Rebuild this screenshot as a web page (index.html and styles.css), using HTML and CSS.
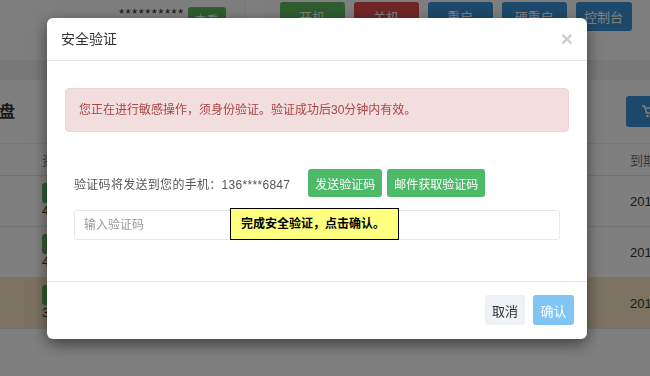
FILE: index.html
```html
<!DOCTYPE html>
<html lang="zh-CN">
<head>
    <meta charset="UTF-8">
    <meta name="viewport" content="width=device-width, initial-scale=1.0">
    <title>安全验证</title>
    <link rel="stylesheet" href="styles.css">
</head>
<body>
    <div class="page">
        <div class="topbar">
            <span class="secret">**********</span>
            <button class="btn btn-success btn-view">查看</button>
            <span class="divider"></span>
            <div class="actions">
                <button class="btn btn-success">开机</button>
                <button class="btn btn-danger">关机</button>
                <button class="btn btn-primary">重启</button>
                <button class="btn btn-primary">硬重启</button>
                <button class="btn btn-primary btn-console">控制台</button>
            </div>
        </div>
        <div class="band"></div>

        <div class="section-head">
            <h3 class="section-title">硬盘</h3>
            <button class="btn btn-primary btn-buy">
                <svg width="14" height="13" viewBox="0 0 14 13">
                    <path d="M0 1h2.5l2 7h7l1.5-5H4" fill="none" stroke="#fff" stroke-width="1.6"/>
                    <circle cx="5.5" cy="11" r="1.3" fill="#fff"/>
                    <circle cx="10.5" cy="11" r="1.3" fill="#fff"/>
                </svg>
                购买
            </button>
        </div>

        <div class="table">
            <div class="tr th">
                <div class="td">资源</div>
                <div class="td td-end">到期时间</div>
            </div>
            <div class="tr">
                <div class="td"><span class="tag">正常</span><div class="size">40GB</div></div>
                <div class="td td-end">2019-06-12</div>
            </div>
            <div class="tr">
                <div class="td"><span class="tag">正常</span><div class="size">40GB</div></div>
                <div class="td td-end">2019-06-12</div>
            </div>
            <div class="tr tr-warn">
                <div class="td"><span class="tag">正常</span><div class="size">30GB</div></div>
                <div class="td td-end">2019-03-28</div>
            </div>
        </div>
    </div>

    <div class="modal-backdrop">
        <div class="modal">
            <div class="modal-header">
                <h4 class="modal-title">安全验证</h4>
                <span class="close">&times;</span>
            </div>
            <div class="modal-body">
                <div class="alert">您正在进行敏感操作，须身份验证。验证成功后30分钟内有效。</div>
                <div class="verify-form">
                    <div class="send-row">
                        <span class="send-label">验证码将发送到您的手机：136****6847</span>
                        <button class="btn-send">发送验证码</button>
                        <button class="btn-send">邮件获取验证码</button>
                    </div>
                    <input type="text" class="code-input" placeholder="输入验证码">
                </div>
                <div class="tip">完成安全验证，点击确认。</div>
            </div>
            <div class="modal-footer">
                <button class="btn-cancel">取消</button>
                <button class="btn-confirm">确认</button>
            </div>
        </div>
    </div>
</body>
</html>
```

FILE: styles.css
```css
* {
    box-sizing: border-box;
}

body {
    margin: 0;
    font-family: "Liberation Sans", "Noto Sans CJK SC", sans-serif;
    font-size: 12px;
    color: #333;
    background-color: #fff;
    overflow: hidden;
}

button {
    font-family: inherit;
    border: none;
    cursor: pointer;
}

/* page under the dialog */
.page {
    width: 700px;
}

.topbar {
    display: flex;
    align-items: flex-start;
    height: 60px;
    padding-left: 119px;
    background-color: #fcfcfc;
}

.secret {
    margin-top: 6px;
    line-height: 16px;
    font-size: 13px;
    letter-spacing: 1.5px;
    color: #222;
}

.btn {
    height: 29px;
    color: #fff;
    font-size: 12px;
    border-radius: 3px;
}

.btn-success {
    background-color: #5cb85c;
}

.btn-danger {
    background-color: #e04c4c;
}

.btn-primary {
    background-color: #3a92d8;
}

.btn-view {
    width: 38px;
    height: 24px;
    margin: 7px 0 0 3px;
}

.divider {
    width: 17px;
    height: 40px;
    margin-left: 19px;
    background-color: #fff;
    border-left: 1px solid #eee;
}

.actions {
    display: flex;
    gap: 9px;
    margin: 2px 0 0 18px;
}

.actions .btn {
    min-width: 65px;
    font-size: 13px;
}

.actions .btn-console {
    min-width: 0;
    width: 56px;
}

.band {
    height: 20px;
    background-color: #f1f1f1;
}

.section-head {
    display: flex;
    align-items: center;
    height: 63px;
}

.section-title {
    margin: 0 0 0 -17px;
    font-size: 16px;
    font-weight: bold;
    line-height: 20px;
}

.btn-buy {
    margin-left: auto;
    width: 74px;
    height: 31px;
    padding-left: 16px;
    display: flex;
    align-items: center;
    gap: 4px;
}

.table {
    border-top: 1px solid #eee;
}

.tr {
    display: flex;
    height: 51px;
    padding-left: 42px;
    border-bottom: 1px solid #e6e6e6;
}

.tr.th {
    height: 32px;
    align-items: center;
    color: #777;
    font-size: 13px;
}

.tr-warn {
    background-color: #f6e4c4;
}

.td {
    padding-top: 7px;
}

.th .td {
    padding-top: 0;
}

.td-end {
    margin-left: auto;
    width: 70px;
    padding-top: 0;
    align-self: center;
    white-space: nowrap;
    font-size: 13px;
}

.tag {
    display: inline-block;
    height: 20px;
    padding: 0 8px;
    line-height: 20px;
    color: #fff;
    background-color: #5cb85c;
    border-radius: 3px;
}

.size {
    line-height: 16px;
    font-size: 13px;
}

/* dialog */
.modal-backdrop {
    position: fixed;
    top: 0;
    left: 0;
    right: 0;
    bottom: 0;
    background-color: rgba(0, 0, 0, 0.5);
}

.modal {
    width: 540px;
    margin: 18px 0 0 47px;
    background-color: #fff;
    border-radius: 6px;
    box-shadow: 0 5px 15px rgba(0, 0, 0, 0.5);
}

.modal-header {
    display: flex;
    justify-content: space-between;
    align-items: center;
    padding: 11px 14px;
    border-bottom: 1px solid #e5e5e5;
}

.modal-title {
    margin: 0;
    font-size: 14px;
    font-weight: normal;
    line-height: 20px;
    color: #333;
}

.close {
    font-size: 21px;
    font-weight: bold;
    line-height: 20px;
    color: #000;
    opacity: 0.2;
}

.modal-body {
    position: relative;
    padding: 27px 18px 41px;
}

.alert {
    padding: 11px 13px;
    line-height: 20px;
    color: #a94442;
    background-color: #f2dede;
    border: 1px solid #f0d4d6;
    border-radius: 4px;
}

.verify-form {
    margin-top: 37px;
    padding: 0 9px;
}

.send-row {
    display: flex;
    align-items: center;
}

.send-label {
    color: #555;
    letter-spacing: 0.3px;
    margin-right: 18px;
}

.btn-send {
    height: 28px;
    padding: 0 7px;
    margin-right: 5px;
    font-size: 12px;
    color: #fff;
    background-color: #4dba69;
    border-radius: 3px;
}

.code-input {
    display: block;
    width: 100%;
    height: 30px;
    margin-top: 13px;
    padding: 0 9px;
    font-family: inherit;
    font-size: 12px;
    border: 1px solid #e8e8e8;
    border-radius: 2px;
    outline: none;
}

.code-input::placeholder {
    color: #999;
}

.tip {
    position: absolute;
    left: 183px;
    top: 147px;
    width: 169px;
    height: 32px;
    padding-left: 10px;
    line-height: 30px;
    font-weight: bold;
    color: #000;
    background-color: #ffff80;
    border: 1px solid #000;
}

.modal-footer {
    display: flex;
    justify-content: flex-end;
    gap: 8px;
    padding: 13px 13px 14px;
    border-top: 1px solid #e5e5e5;
}

.btn-cancel,
.btn-confirm {
    height: 30px;
    width: 40px;
    font-size: 13px;
    border-radius: 3px;
}

.btn-cancel {
    color: #333;
    background-color: #eef1f5;
}

.btn-confirm {
    width: 41px;
    color: #fff;
    background-color: #80c5f3;
}
```
